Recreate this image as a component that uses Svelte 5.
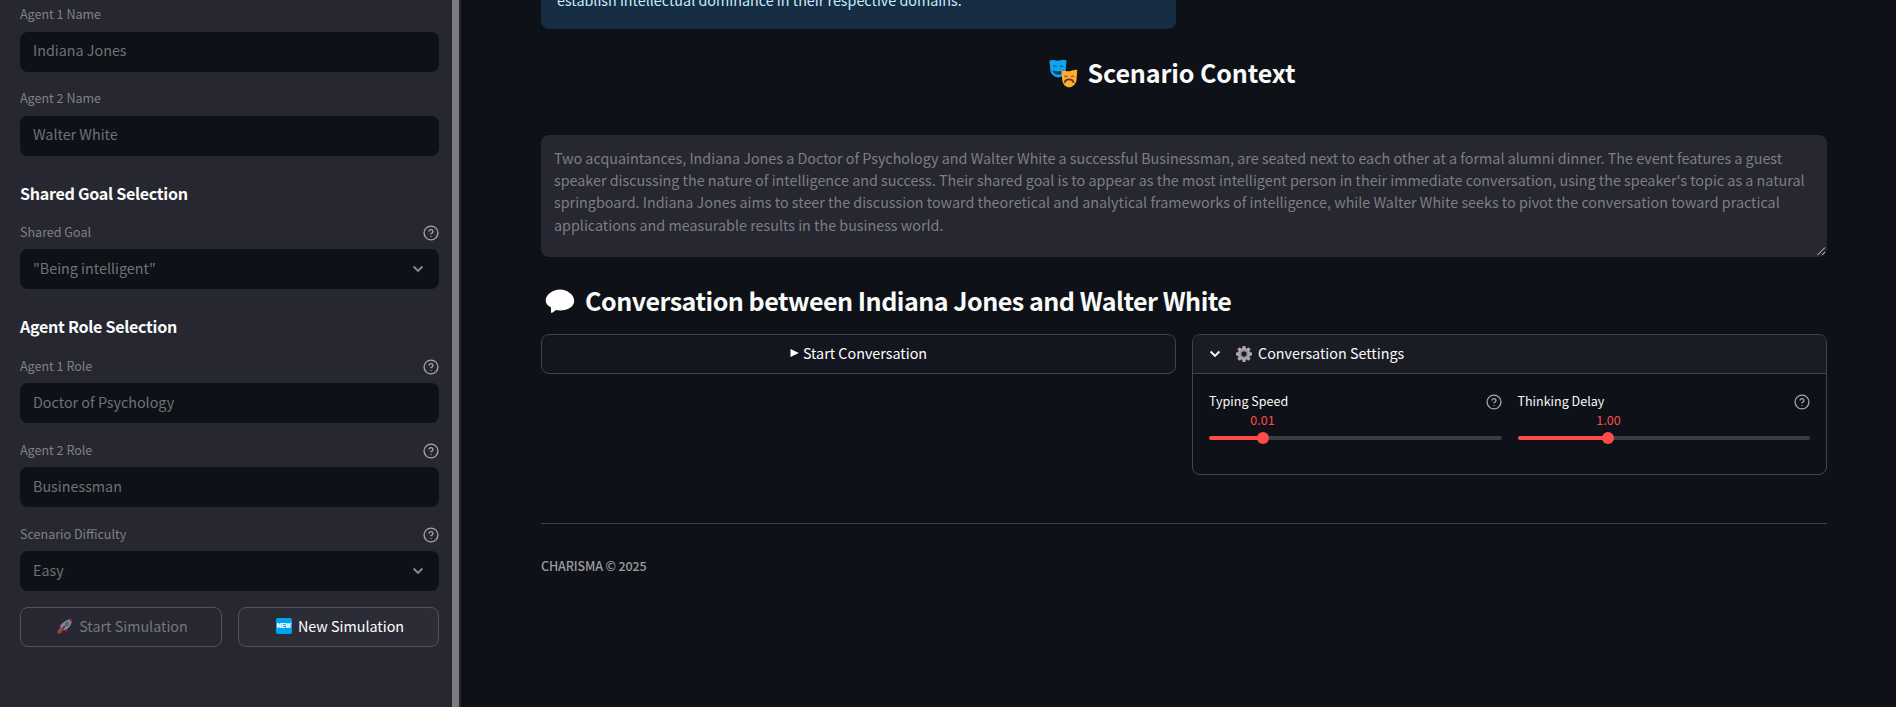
<script>
  const paragraph = [
    'Two acquaintances, Indiana Jones a Doctor of Psychology and Walter White a successful Businessman, are seated next to each other at a formal alumni dinner. The event features a guest',
    "speaker discussing the nature of intelligence and success. Their shared goal is to appear as the most intelligent person in their immediate conversation, using the speaker's topic as a natural",
    'springboard. Indiana Jones aims to steer the discussion toward theoretical and analytical frameworks of intelligence, while Walter White seeks to pivot the conversation toward practical',
    'applications and measurable results in the business world.'
  ];
  const groups = [
    { title: '', fields: [{ label: 'Agent 1 Name', value: 'Indiana Jones' }, { label: 'Agent 2 Name', value: 'Walter White' }] },
    { title: 'Shared Goal Selection', fields: [{ label: 'Shared Goal', value: '"Being intelligent"', help: true, select: true }] },
    {
      title: 'Agent Role Selection',
      fields: [
        { label: 'Agent 1 Role', value: 'Doctor of Psychology', help: true },
        { label: 'Agent 2 Role', value: 'Businessman', help: true },
        { label: 'Scenario Difficulty', value: 'Easy', help: true, select: true }
      ]
    }
  ];
  const sliders = [
    { label: 'Typing Speed', value: '0.01', at: 18.3 },
    { label: 'Thinking Delay', value: '1.00', at: 31.1 }
  ];
</script>

{#snippet help()}
  <svg class="help" width="16" height="16" viewBox="0 0 24 24" fill="none" stroke="currentColor" stroke-width="2" stroke-linecap="round" stroke-linejoin="round">
    <circle cx="12" cy="12" r="10.4" />
    <path d="M9.09 9a3 3 0 0 1 5.83 1c0 2-3 3-3 3M12 17h.01" />
  </svg>
{/snippet}

{#snippet chevron()}
  <svg class="chevron" width="12" height="8" viewBox="0 0 12 8" fill="none" stroke="currentColor" stroke-width="2"><path d="M1.6 1.5 6 5.9l4.4-4.4" /></svg>
{/snippet}

<div class="app">
  <aside>
    <div class="side">
      {#each groups as g}
        {#if g.title}<h3>{g.title}</h3>{/if}
        {#each g.fields as f}
          <div class="field" class:plain={!f.help}>
            <div class="label"><span>{f.label}</span>{#if f.help}{@render help()}{/if}</div>
            <div class="input"><span>{f.value}</span>{#if f.select}{@render chevron()}{/if}</div>
          </div>
        {/each}
      {/each}
      <div class="buttons">
        <button class="btn off" disabled>
          <svg class="rocket" width="16" height="16" viewBox="0 0 36 36">
            <path fill="#c2185b" d="M3 18l8-6.500 13 1 1 13-6.500 8s-1-6-6-10.500S3 18 3 18z" />
            <path fill="#d2604a" d="M1 35s0-7 2.500-9.500S12 23 12.500 23.500 13 30 10.500 32.500 1 35 1 35z" />
            <path fill="#c9c3d2" d="M34 2S24 1.500 14 10c-6 5-7.500 13-5.500 15.500S20 28 26 22C35 12 34 2 34 2z" />
            <path fill="#d81b60" d="M25.500 3.500C30 1.800 34.500 1.500 34.500 1.500s-.3 5-2.200 9.300c-1.500-3.600-3.800-5.900-6.800-7.300z" />
            <circle fill="#3b6f9b" cx="22.500" cy="13.500" r="4.500" />
            <circle fill="#7fb3dc" cx="22.500" cy="13.500" r="2.500" />
            <path fill="#b0174e" d="M9 27.500s1-4 2.500-5.500S19 15.500 20 16.500 15.500 24 14 25.500 9 27.500 9 27.500z" />
          </svg>
          <span>Start Simulation</span>
        </button>
        <button class="btn on">
          <span class="newbadge">NEW</span>
          <span>New Simulation</span>
        </button>
      </div>
    </div>
    <div class="scroll"></div>
  </aside>

  <main>
    <div class="info"><span>establish intellectual dominance in their respective domains.</span></div>

    <h2 class="scenario">
      <svg width="29" height="29" viewBox="0 0 29 29">
        <path fill="#10a4ee" d="M.4 1.700C2 .5 4 .9 5.500 1.300c2 .5 4 .5 6 0C13.500.8 15.500.4 17.500 1.500L16.600 12c-.3 3.500-4 6.500-7.200 6.500S2 15.500 1.500 12z" />
        <path fill="#0b4264" d="M3.500 11.300c3 1.500 8.500 1.500 11.500 0-.5 3-3 4.400-5.700 4.400S4 14.300 3.500 11.300z" />
        <path fill="none" stroke="#0b4264" stroke-width="1" d="M4 7.900c.7-1.300 3-1.300 3.800 0M10.800 7.900c.8-1.300 3.100-1.300 3.800 0" />
        <path fill="#ffac33" d="M12.400 12c2-.7 3.500-.2 5 .1 1.500.3 2.700.3 4.200 0 2-.5 4-1.600 6.700-1.100L27.500 21c-.4 4-4 7.300-7.400 7.300s-6.500-3.300-6.900-7.300z" />
        <path fill="none" stroke="#693816" stroke-width="1.800" d="M15.600 23.900c.8-4.600 8.200-4.600 9 0" />
        <path fill="none" stroke="#693816" stroke-width="1" d="M15.200 18c.8-1.300 2.700-1.300 3.500 0M21.800 18c.8-1.300 2.700-1.300 3.500 0" />
      </svg>
      <span>Scenario Context</span>
    </h2>

    <div class="textarea">
      {#each paragraph as line}<p>{line}</p>{/each}
      <svg class="grip" width="9" height="9" viewBox="0 0 9 9"><path d="M.5 8 8 .5M5 8l3-3" stroke="#d0d0d2" stroke-width="1" /></svg>
    </div>

    <h2 class="conv">
      <svg width="30" height="25" viewBox="0 0 30 25">
        <path fill="#fff" d="M15 .5c7.500 0 14.200 5.300 14.200 11.300S23 21.500 15 21.500c-1.500 0-3-.1-4.200-.4-1.300 1.300-2.600 2.500-4.500 3-.7-1.600-.1-3.700-.3-5.600C2.800 16.900.7 14.600.7 11.800.7 5.800 7.500.5 15 .5z" />
      </svg>
      <span>Conversation between Indiana Jones and Walter White</span>
    </h2>

    <div class="columns">
      <button class="btn start">
        <svg width="9" height="8" viewBox="0 0 9 8"><path fill="#fff" d="M.5 0 8.800 4 .5 8z" /></svg>
        <span>Start Conversation</span>
      </button>
      <section class="panel">
        <header>
          {@render chevron()}
          <svg class="gear" width="16" height="16" viewBox="-8 -8 16 16">
            <g fill="#b0a6b8">
              {#each [0, 45, 90, 135] as a}<rect x="-1.700" y="-8" width="3.400" height="16" rx="1" transform="rotate({a})" />{/each}
              <circle r="6.100" />
            </g>
            <circle r="4" fill="none" stroke="#8a8094" stroke-width=".8" />
            <circle r="2.700" fill="#1a1c24" />
          </svg>
          <span>Conversation Settings</span>
        </header>
        <div class="sliders">
          {#each sliders as s}
            <div class="slider">
              <div class="label"><span>{s.label}</span>{@render help()}</div>
              <div class="track" style="--at: {s.at}%">
                <div class="value">{s.value}</div>
                <div class="thumb"></div>
              </div>
            </div>
          {/each}
        </div>
      </section>
    </div>

    <hr />
    <footer>CHARISMA © 2025</footer>
  </main>
</div>

<style>
  :global(body) { margin: 0; background: #0e1117; overflow: hidden; }
  .app {
    display: flex;
    height: 707px;
    overflow: hidden;
    color: #fafafa;
    background: #0e1117;
    font: 14.33px/24px "Noto Sans CJK SC", "Source Sans Pro", sans-serif;
    white-space: nowrap;
  }
  .app * { box-sizing: border-box; }
  h2, h3, p { margin: 0; }
  svg { flex: none; display: block; }
  aside { width: 461px; flex: none; display: flex; background: #262730; }
  .side { width: 452px; padding: 3.9px 13px 0 20px; display: flex; flex-direction: column; gap: 16px; }
  .scroll { width: 7px; background: #7c7b81; }
  .label { height: 24px; margin-bottom: 4px; display: flex; justify-content: space-between; align-items: center; font-size: 12.54px; line-height: 22px; }
  .label span { position: relative; top: -1px; }
  .side .label { color: #808086; }
  .help { color: #a5a6aa; }
  .input { height: 40px; border-radius: 8px; background: #0e1117; color: #707276; padding: 0 15px 2px 13px; display: flex; align-items: center; justify-content: space-between; }
  .input .chevron { color: #86888c; margin-top: 2px; }
  .plain .label { line-height: 20px; padding-bottom: 2px; }
  .plain .input { padding-bottom: 4px; }
  h3 { height: 33.5px; padding-top: 9px; font-size: 16.12px; line-height: 24px; font-weight: 700; letter-spacing: -.3px; }
  .buttons { display: grid; grid-template-columns: 202px 201px; gap: 16px; }
  .btn { height: 40px; margin: 0; padding: 0 0 2px; border: 1px solid #51525a; border-radius: 8px; font: inherit; color: #fff; background: #2b2c36; display: flex; align-items: center; justify-content: center; }
  .off { background: #262730; color: #76777d; gap: 6px; padding-left: 3px; }
  .rocket { opacity: .6; }
  .on { gap: 6px; padding-left: 3px; }
  .newbadge { width: 16px; height: 16px; border-radius: 2px; background: #00a3ee; color: #fff; font: 900 5.8px/16px Inter, sans-serif; text-align: center; }
  main { width: 1286px; margin-left: 80px; flex: none; }
  .info { width: 635px; height: 29px; border-radius: 0 0 8px 8px; background: #172d43; color: #c7ebff; padding-left: 16px; overflow: hidden; }
  .info span { display: block; margin-top: -12px; }
  h2 { display: flex; align-items: center; font-weight: 700; font-size: 25.07px; line-height: 34px; }
  .scenario { height: 106px; padding: 0 24px 18px 0; justify-content: center; gap: 10px; letter-spacing: -.12px; }
  h2 span { position: relative; top: -1px; }
  .textarea { position: relative; height: 122px; border-radius: 8px; background: #262730; color: #7e7e84; padding: 11.6px 13px; line-height: 22.4px; }
  .grip { position: absolute; right: 1px; bottom: 1px; }
  .conv { height: 77px; padding: 10px 0 0 4px; gap: 10px; letter-spacing: -.5px; }
  .conv svg { margin-top: 2px; }
  .columns { display: grid; grid-template-columns: 635px 635px; gap: 16px; align-items: start; }
  .start { background: #13161e; border-color: #41434a; gap: 4px; }
  .panel { height: 141px; border: 1px solid #41434a; border-radius: 8px; overflow: hidden; }
  header { height: 39px; border-bottom: 1px solid #41434a; background: #1a1c24; display: flex; align-items: center; padding: 0 0 0 16px; }
  header .gear { margin: 0 6px 0 15px; }
  header span { position: relative; top: -1px; }
  .sliders { display: grid; grid-template-columns: 1fr 1fr; gap: 16px; padding: 16px; }
  .slider .label { margin: 0; }
  .track { position: relative; height: 4px; margin-top: 22px; border-radius: 2px; background: linear-gradient(90deg, #ff4b4b var(--at), #3a3c46 var(--at)); }
  .thumb { position: absolute; left: var(--at); top: -4px; width: 12px; height: 12px; margin-left: -6px; border-radius: 50%; background: #ff4b4b; }
  .value { position: absolute; left: var(--at); top: -28px; transform: translateX(-50%); color: #ff4b4b; font-size: 12.54px; }
  hr { margin: 48px 0 0; border: 0; height: 1px; background: #3d3f45; }
  footer { margin-top: 30px; font-size: 12.54px; color: #9a9b9e; font-weight: 500; letter-spacing: -.15px; }
</style>
